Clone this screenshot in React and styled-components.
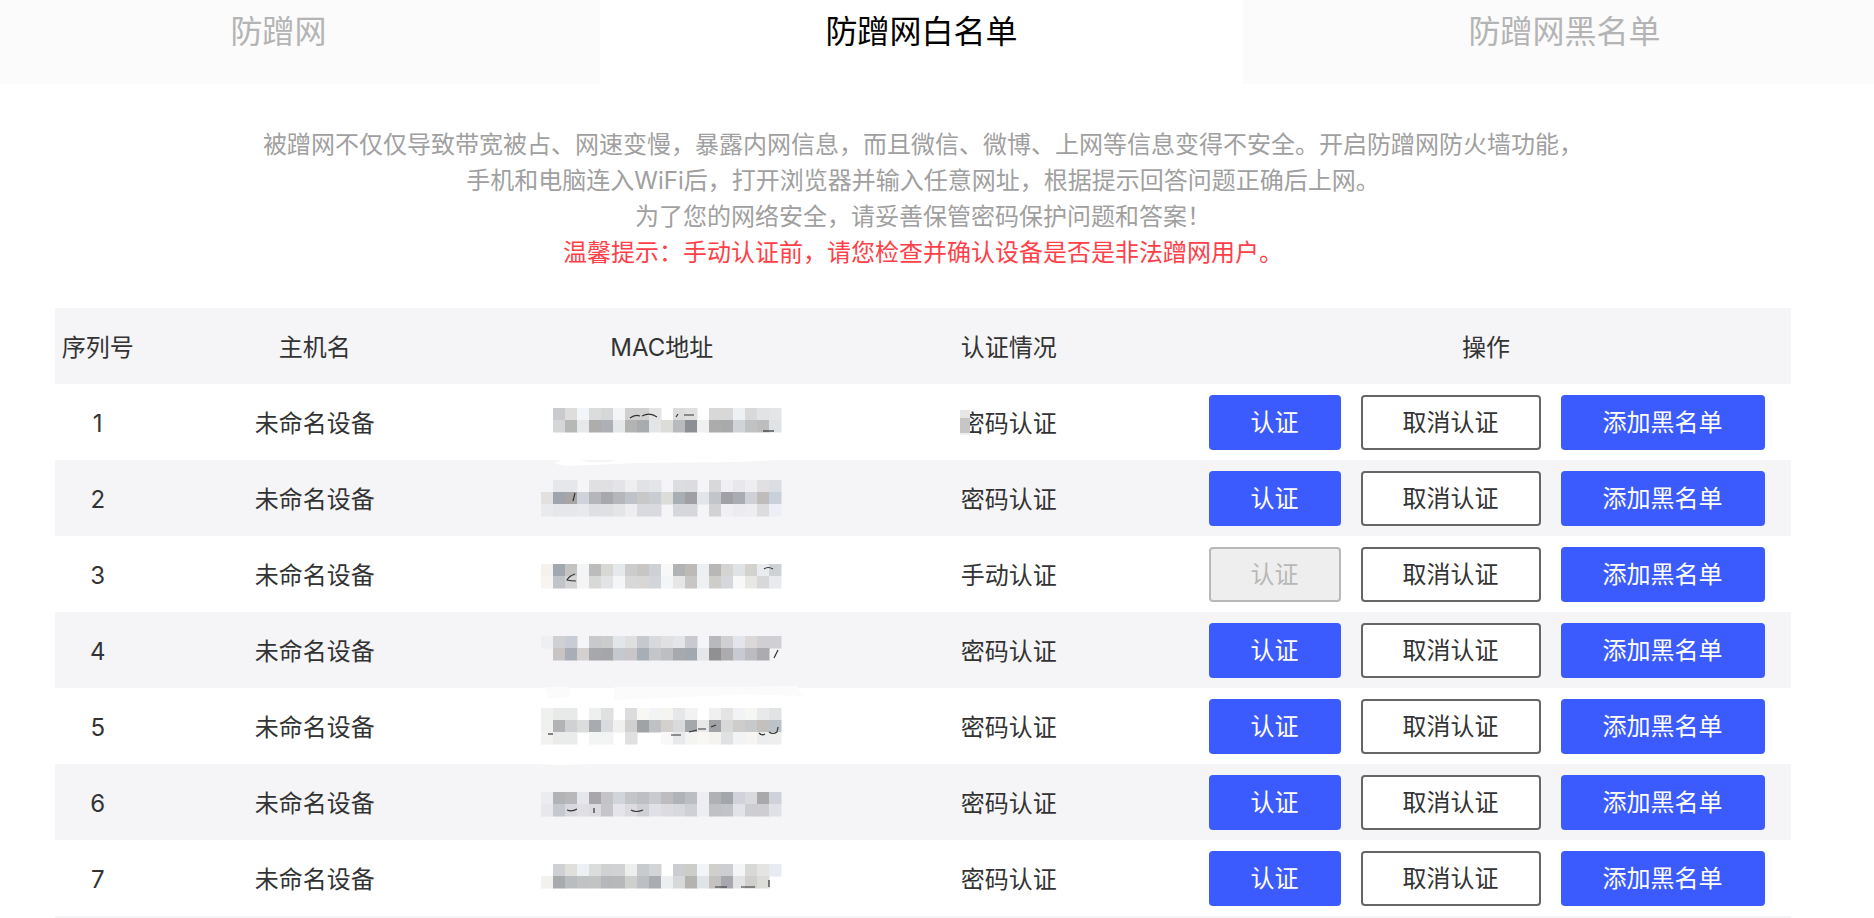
import styled, { createGlobalStyle } from "styled-components";

const GlobalStyle = createGlobalStyle`
  html, body {
    margin: 0;
    height: 918px;
    overflow: hidden;
    background: #fff;
    font-family: Inter, "Noto Sans CJK SC", sans-serif;
  }
`

const Page = styled.div`
  width: 1846px;
`

const Tabs = styled.div`
  display: grid;
  grid-template-columns: repeat(3, 643px);
  margin-left: -43px;
  height: 84px;
`

const Tab = styled.div`
  background: ${props => props.$active ? "#fff" : "#fbfbfb"};
  color: ${props => props.$active ? "#000" : "#b4b4b4"};
  font-size: 32px;
  line-height: 64px;
  text-align: center;
`

const Intro = styled.div`
  margin-top: 43px;
  color: #a0a0a0;
  font-size: 24px;
  line-height: 36px;
  text-align: center;
`

const Warning = styled.div`
  color: #ff4048;
`

const Table = styled.div`
  width: 94%;
  margin: 37px auto 0;
`

const Row = styled.div`
  display: grid;
  grid-template-columns: 5% 20% 20% 20% 35%;
  height: 76px;
  background: ${props => props.$alt ? "#f5f5f8" : "#fff"};
`

// top edge of the next row, the window cuts it off here
const TableEnd = styled.div`
  height: 2px;
  background: #f5f5f8;
`

const Cell = styled.div`
  position: relative;
  display: flex;
  align-items: center;
  justify-content: center;
  padding: 4px 2px 0 0;
  color: #333;
  font-size: 24px;
  line-height: 1;
`

const MacCell = styled(Cell)`
  padding: 0;
`

const Actions = styled(Cell)`
  gap: 20px;
  padding: 0 0 0 1px;
`

const Btn = styled.div`
  box-sizing: border-box;
  width: ${props => props.$w}px;
  height: 55px;
  display: flex;
  align-items: center;
  justify-content: center;
  padding: 1px 2px 0 0;
  border-radius: 4px;
  font-size: 24px;
  ${props => props.$kind === "primary" && "background: #3c5bff; color: #fff;"}
  ${props => props.$kind === "outline" && "background: #fff; color: #333; border: 2px solid #666;"}
  ${props => props.$kind === "disabled" && "background: #eee; color: #b8b8b8; border: 2px solid #b8b8b8;"}
`

const MacSmear = styled.svg`
  display: block;
  width: 320px;
  height: 76px;
  overflow: visible;
`

// the gray scrap left over from the mosaic, sits on top of the first status text
const StatusPatch = styled.div`
  position: absolute;
  left: 124px;
  top: 26px;
  width: 10px;
  height: 25px;
  background: linear-gradient(#e6e6e6 0 32%, #c6c6c6 32% 92%, #eee 92%);
`

const _ = null

const rows = [
  {
    status: "密码认证",
    top: 24,
    lines: [
      [_, "c9cbce", "dedddb", "f3f6f9", "dcdcdc", "d6d7d9", "f4f5f6", "d0d0d0", "d0d0d0", "e4e4e4", _, "dcdcdc", "e0e0e0", _, "d8d8d8", "d8d8d8", "eef1f3", "d9d9d9", "e2e3e4", "e4e5e6"],
      [_, "d5d6d8", "b6b8b6", "e7e8ea", "aeadab", "adb0b6", "e6e7e9", "b3b3b3", "a9acaf", "e4e5e6", "dcdcd9", "b8babd", "8c8f93", "eff0ef", "acacac", "a9abab", "d0d3d7", "c0c2c3", "bdbdbd", "e0e3e6"],
    ],
    marks: ["M129 34q5-4 10-2M141 32q8-4 15 1M175 33l2-3M183 31h10", "M262 47h11"],
  },
  {
    status: "密码认证",
    top: 20,
    lines: [
      [_, "e6e7ea", "e6e7ea", _, "e0e0e3", "e0e0e3", "e4e4e8", "eeeef1", "e2e2e6", "e4e5e8", _, "dcdde1", "dcdce0", _, "d8d8da", "f0f0f4", "e8e8ec", "eeeef1", "e0e0e2", "dcdde3"],
      ["e2e1df", "a0a5ad", "a8a6a4", "d0d4da", "b6b6ba", "a6a8ad", "b4b6ba", "bfc3c8", "c8c8c9", "c9cdd2", "dcdcd9", "a9aeb4", "a09fa3", "e2e5ea", "c4c5c8", "a0a0a6", "aaacb4", "d0d1d6", "c0bcbc", "c8d0dc"],
      ["e8eaec", "e6e7ea", "e6e7ea", "e8e9ec", "dedfe2", "dfe0e3", "e4e5e7", "eeeef0", "d8dae0", "d8dae0", _, "d6d7dc", "d6d7dc", _, "d2d2d5", "f0f0f4", "ececf0", "eeeef1", "dcdcdf", "eeeef6"],
    ],
    marks: ["M74 33l-2 8"],
    smudge: { fill: "#fff", d: "M55 2l14-4 18 4 20 0 10-2 160 0-40 2-100 1-70 3-12-2z" },
  },
  {
    status: "手动认证",
    top: 28,
    lines: [
      ["f5f1ec", "a2a8b0", "c4c4c2", "f3f4f6", "bcbcbc", "d8d7d4", "e6e9ec", "cccccc", "c8c6c4", "cdd1d6", "f8f8f8", "b2b3b5", "bcb9b6", "ecf0f3", "b8b7b6", "d4d4d2", "dfe3e6", "d4d2cf", "e8ecef", "cfd2d4"],
      ["f8f5f0", "c0c4c8", "d4d4d4", "f4f4f4", "d8d8d6", "e2e3e6", "f4f5f6", "d8d8d8", "d8d7d5", "d2d5d9", "f4f5f7", "e6e6e6", "c8c6c4", "eef1f4", "cfcdca", "d5d7dc", "f8f8f8", "e8e7e4", "d6d8da", "e8eaed"],
    ],
    marks: ["M74 38q-6 2-8 6 4 1 9 1", "M263 33q4-3 9 0"],
  },
  {
    status: "密码认证",
    top: 24,
    lines: [
      ["eeeff2", "d0d0d2", "c8ccd4", _, "c8c9cc", "cccccc", "e2e5ea", "e0dfdf", "c6c9ce", "d8d9dd", "e0e0e2", "e4e5e9", "c8cacf", _, "b8b9bc", "d0d0d3", "e4e5ec", "dcd8d8", "d0d0d4", "d0d0d4"],
      [_, "c8c4c4", "a8aeb8", "d4d0d0", "a6a8ac", "a6a6a8", "c6c8d0", "c8c6c8", "a8aeb6", "c4c6ca", "bcbec2", "a8a9ac", "a2a8b0", "e4e6ea", "909092", "acacae", "c8cad2", "bcbcc0", "acacb0", _],
    ],
    marks: ["M277 38l-4 8"],
    smudge: { fill: "#fbfbfb", d: "M44 75h24l2 10-22 1zM113 75h130l-10 8-120 5zM240 75l56-1 6 10-70-2z" },
  },
  {
    status: "密码认证",
    top: 20,
    lines: [
      ["f0f0ee", "e8e9e9", "e8eaea", _, "eef0f0", "dfe0e1", _, "dcdcdc", "f8f7f4", "f2f3f4", "f6f4f1", "e6e7e8", "f1f2f1", _, "eff0ef", "e4e4e4", "f2f3f4", "f6f6f2", "e8e9ea", "e2e3e4"],
      ["f0f0ee", "b2b3b6", "d0d1d3", "dcdcdc", "a8abaf", "dadbde", "f0f0ee", "d0d0d0", "a0a3a6", "c0c1c4", "d4d0ce", "d8dadc", "a4a8ab", "e8e8e8", "a0a2a6", "d8d8d8", "cfcdcb", "c6cacd", "c4c0be", "bcc2ca"],
      ["f2f2f0", "eaebea", "eaebeb", _, "f3f4f4", "f2f3f3", _, "e0e0e0", _, _, "f8f8f8", "e8e9ea", "f4f4f2", "f8f7f4", "f4f3ef", "e0e1e3", "f2f3f4", "f6f5f2", "ecedee", "eeeeee"],
    ],
    marks: ["M170 47h10M188 44l8-2M197 41h8M210 39l5-2", "M47 46h5", "M258 45q3 3 6 1M268 44q4 3 8 0l1-5"],
  },
  {
    status: "密码认证",
    top: 28,
    lines: [
      ["ececf0", "b2b3b6", "b8b8ba", "e6e7ec", "a8a6aa", "c4c4c6", "d2d4dc", "c4c5c8", "bebfc2", "c8cad0", "bebcbe", "b0b3b8", "bbbec3", "eeeef2", "b0b1b4", "a4a7aa", "d2d3da", "dadade", "a9a9ac", "d0d2da"],
      ["e8e8ec", "c6c8d0", "d8d8de", "e0e0e4", "dcdce0", "c6c6ca", "e4e4ea", "dcdce0", "d0d0d4", "e0e1e6", "dcdce0", "d8d9de", "cfd0d6", "eeeef2", "c0c1c4", "c2c3c8", "e2e3e8", "cdcdd2", "cdcdd2", "e0e1e6"],
    ],
    marks: ["M66 46q5 2 10-1M93 44v5M130 46q5 3 12 0"],
    smudge: { fill: "#fff", d: "M0 -6l60 -2 10 3 70 0 60-1 40 4-120 1-60 2-50-2z" },
  },
  {
    status: "密码认证",
    top: 24,
    lines: [
      [_, "ced0d3", "e0dfdc", "edf1f4", "dcdcdc", "d0d1d3", "d0d2d4", "eeeeee", "c8cbce", "d2d4d6", _, "cccdd0", "ccccc8", "f2f5f8", "d0cfcc", "cdced2", "f4f5f7", "d8d8d6", "e4e5e2", "e8ecf2"],
      ["f2f1ee", "a8abae", "babdc0", "c0c2c4", "c2c4c4", "b6b7ba", "b6b8ba", "cfcfcd", "bcc0c3", "a9acb0", "eceef0", "d6d8da", "b4b3b0", "dfe4e8", "c4c2c0", "a8a7ad", "e2e3e5", "d0cfcc", "dcdcda", _],
    ],
    marks: ["M214 47h12M240 47h14M268 40v7"],
  },
]

const MacMosaic = ({ top, lines, marks = [], smudge }) => (
  <MacSmear viewBox="0 0 320 76">
    <g transform="translate(-2 0)">
      {lines.map((line, y) => line.map((color, x) => color && (
        <rect key={`${x}-${y}`} x={40 + x * 12} y={top + y * 12} width="12.5" height="12.5" fill={`#${color}`} />
      )))}
      {smudge && <path d={smudge.d} fill={smudge.fill} />}
      {marks.map((d, i) => <path key={i} d={d} fill="none" stroke="#333" strokeWidth="1.2" />)}
    </g>
  </MacSmear>
)

const App = () => {
  return (
    <Page>
      <GlobalStyle />
      <Tabs>
        <Tab>防蹭网</Tab>
        <Tab $active>防蹭网白名单</Tab>
        <Tab>防蹭网黑名单</Tab>
      </Tabs>
      <Intro>
        <div>被蹭网不仅仅导致带宽被占、网速变慢，暴露内网信息，而且微信、微博、上网等信息变得不安全。开启防蹭网防火墙功能，</div>
        <div>手机和电脑连入WiFi后，打开浏览器并输入任意网址，根据提示回答问题正确后上网。</div>
        <div>为了您的网络安全，请妥善保管密码保护问题和答案！</div>
        <Warning>温馨提示：手动认证前，请您检查并确认设备是否是非法蹭网用户。</Warning>
      </Intro>
      <Table>
        <Row $alt>
          <Cell>序列号</Cell>
          <Cell>主机名</Cell>
          <Cell>MAC地址</Cell>
          <Cell>认证情况</Cell>
          <Cell>操作</Cell>
        </Row>
        {rows.map((row, index) => (
          <Row key={index} $alt={index % 2 === 1}>
            <Cell>{index + 1}</Cell>
            <Cell>未命名设备</Cell>
            <MacCell>
              <MacMosaic top={row.top} lines={row.lines} marks={row.marks} smudge={row.smudge} />
            </MacCell>
            <Cell>
              {row.status}
              {index === 0 && <StatusPatch />}
            </Cell>
            <Actions>
              <Btn $w={132} $kind={row.status === "手动认证" ? "disabled" : "primary"}>认证</Btn>
              <Btn $w={180} $kind="outline">取消认证</Btn>
              <Btn $w={204} $kind="primary">添加黑名单</Btn>
            </Actions>
          </Row>
        ))}
        <TableEnd />
      </Table>
    </Page>
  );
}

export default App;
